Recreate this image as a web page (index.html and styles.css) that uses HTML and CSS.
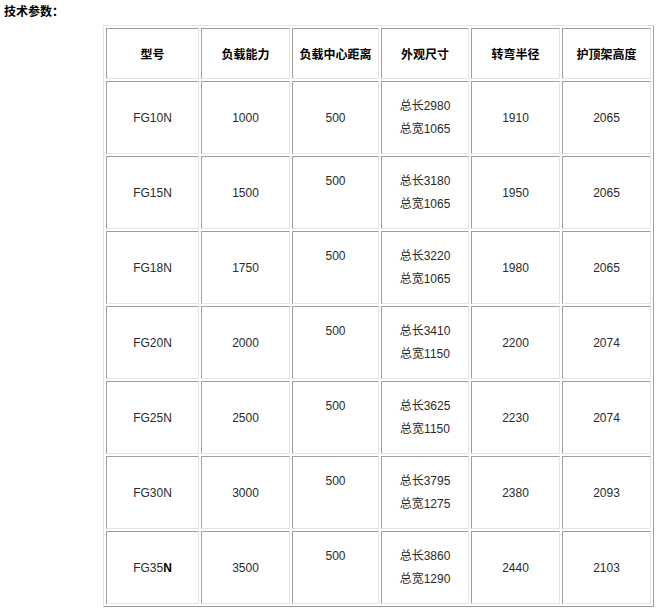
FILE: index.html
```html
<!DOCTYPE html>
<html>
<head>
<meta charset="utf-8">
<link rel="stylesheet" href="styles.css">
</head>
<body>
<div class="title">技术参数：</div>
<table class="spec">
  <colgroup>
    <col class="c1"><col class="c2"><col class="c3"><col class="c4"><col class="c5"><col class="c6">
  </colgroup>
  <tr class="head">
    <th>型号</th><th>负载能力</th><th>负载中心距离</th><th>外观尺寸</th><th>转弯半径</th><th>护顶架高度</th>
  </tr>
  <tr><td>FG10N</td><td>1000</td><td>500</td><td class="dim">总长2980<br>总宽1065</td><td>1910</td><td>2065</td></tr>
  <tr><td>FG15N</td><td>1500</td><td class="dim">500<br>&nbsp;</td><td class="dim">总长3180<br>总宽1065</td><td>1950</td><td>2065</td></tr>
  <tr><td>FG18N</td><td>1750</td><td class="dim">500<br>&nbsp;</td><td class="dim">总长3220<br>总宽1065</td><td>1980</td><td>2065</td></tr>
  <tr><td>FG20N</td><td>2000</td><td class="dim">500<br>&nbsp;</td><td class="dim">总长3410<br>总宽1150</td><td>2200</td><td>2074</td></tr>
  <tr><td>FG25N</td><td>2500</td><td class="dim">500<br>&nbsp;</td><td class="dim">总长3625<br>总宽1150</td><td>2230</td><td>2074</td></tr>
  <tr><td>FG30N</td><td>3000</td><td class="dim">500<br>&nbsp;</td><td class="dim">总长3795<br>总宽1275</td><td>2380</td><td>2093</td></tr>
  <tr><td>FG35<b>N</b></td><td>3500</td><td class="dim">500<br>&nbsp;</td><td class="dim">总长3860<br>总宽1290</td><td>2440</td><td>2103</td></tr>
</table>
</body>
</html>
```
FILE: styles.css
```css
body {
  margin: 0;
  padding: 3px 4px;
  background: #ffffff;
  font-family: "Liberation Sans", "Noto Sans CJK SC", sans-serif;
  font-size: 12px;
  color: #2a2a2a;
}
.title {
  font-weight: bold;
  color: #000000;
  line-height: 16px;
  font-family: "Noto Sans CJK SC", sans-serif;
}
.spec {
  margin: 6px 0 0 99px;
  table-layout: fixed;
  border-collapse: separate;
  border-spacing: 2px;
  border: 1px solid;
  border-color: #e6e4dc #a09f98 #a09f98 #e6e4dc;
}
.c1 { width: 93px; }
.c2 { width: 89px; }
.c3 { width: 87px; }
.c4 { width: 88px; }
.c5 { width: 89px; }
.c6 { width: 89px; }
.spec th, .spec td {
  border: 1px solid;
  border-color: #a09f98 #e6e4dc #e6e4dc #a09f98;
  text-align: center;
  vertical-align: middle;
  padding: 0;
}
.spec th {
  height: 49px;
  font-weight: bold;
  color: #000000;
  font-family: "Noto Sans CJK SC", sans-serif;
  font-size: 12px;
}
.spec td {
  height: 71px;
}
.spec td.dim {
  line-height: 23px;
}
.spec td b {
  color: #000000;
}
```
